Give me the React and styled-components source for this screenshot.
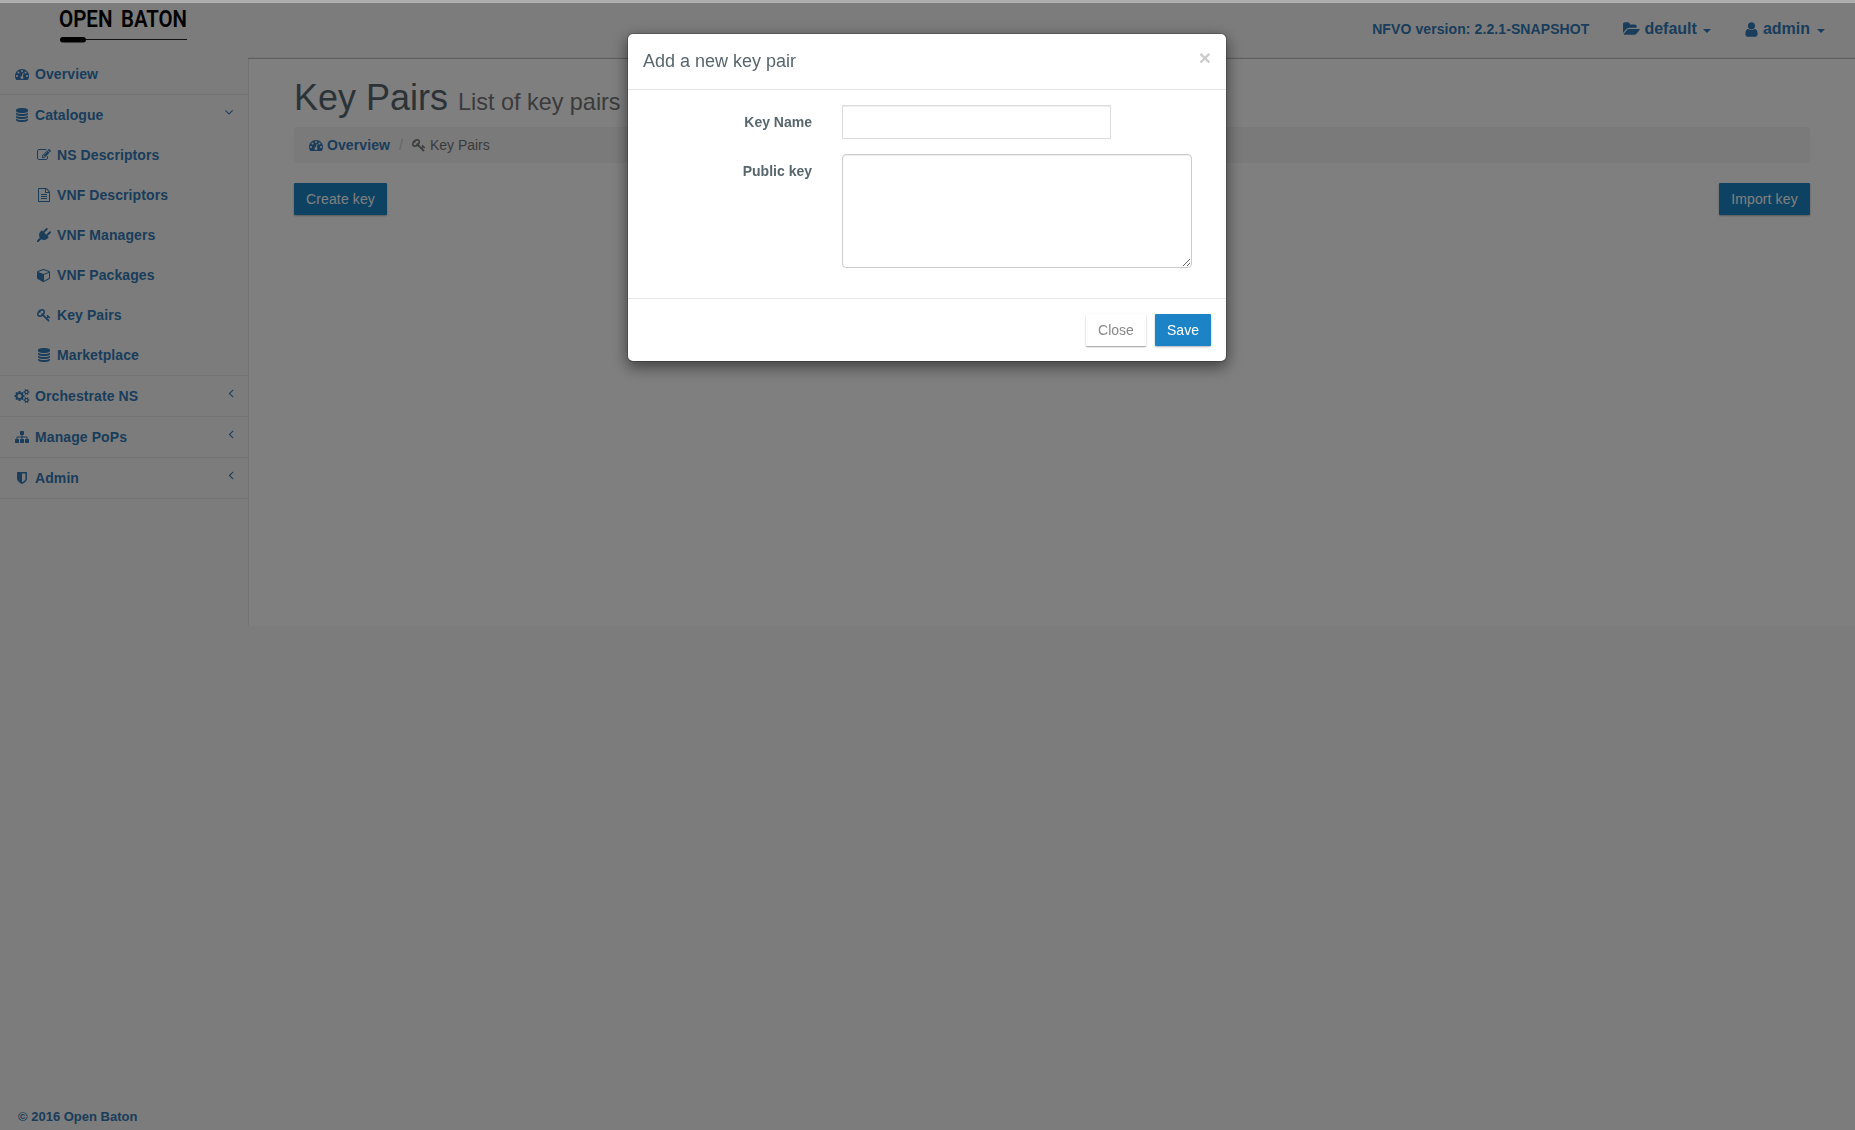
import React from 'react';
import styled, { createGlobalStyle, css } from 'styled-components';

const GlobalStyle = createGlobalStyle`
  *, *::before, *::after { box-sizing: border-box; }
  body {
    margin: 0;
    background: #f8f8f8;
    color: #58666e;
    font: 14px/20px "Liberation Sans", Arial, sans-serif;
  }
`;

const ICONS = {
  dashboard: 'M384 1152q0-53-37.5-90.5t-90.5-37.5-90.5 37.5-37.5 90.5 37.5 90.5 90.5 37.5 90.5-37.5 37.5-90.5zm192-448q0-53-37.5-90.5t-90.5-37.5-90.5 37.5-37.5 90.5 37.5 90.5 90.5 37.5 90.5-37.5 37.5-90.5zm428 481l101-382q6-26-7.5-48.5t-38.5-29.5-48 6.5-30 39.5l-101 382q-60 5-107 43.5t-63 98.5q-20 77 20 146t117 89 146-20 89-117q16-60-6-117t-72-91zm660-33q0-53-37.5-90.5t-90.5-37.5-90.5 37.5-37.5 90.5 37.5 90.5 90.5 37.5 90.5-37.5 37.5-90.5zm-640-640q0-53-37.5-90.5t-90.5-37.5-90.5 37.5-37.5 90.5 37.5 90.5 90.5 37.5 90.5-37.5 37.5-90.5zm448 192q0-53-37.5-90.5t-90.5-37.5-90.5 37.5-37.5 90.5 37.5 90.5 90.5 37.5 90.5-37.5 37.5-90.5zm320 448q0 261-141 483-19 29-54 29h-1402q-35 0-54-29-141-221-141-483 0-182 71-348t191-286 286-191 348-71 348 71 286 191 191 286 71 348z',
  database: 'M896 768q237 0 443-43t325-127v170q0 69-103 128t-280 93.5-385 34.5-385-34.5-280-93.5-103-128v-170q119 84 325 127t443 43zm0 768q237 0 443-43t325-127v170q0 69-103 128t-280 93.5-385 34.5-385-34.5-280-93.5-103-128v-170q119 84 325 127t443 43zm0-384q237 0 443-43t325-127v170q0 69-103 128t-280 93.5-385 34.5-385-34.5-280-93.5-103-128v-170q119 84 325 127t443 43zm0-1152q208 0 385 34.5t280 93.5 103 128v128q0 69-103 128t-280 93.5-385 34.5-385-34.5-280-93.5-103-128v-128q0-69 103-128t280-93.5 385-34.5z',
  edit: 'M888 1184l116-116-152-152-116 116v56h96v96h56zm440-720q-16-16-33 1l-350 350q-17 17-1 33t33-1l350-350q17-17 1-33zm80 594v190q0 119-84.5 203.5t-203.5 84.5h-832q-119 0-203.5-84.5t-84.5-203.5v-832q0-119 84.5-203.5t203.5-84.5h832q63 0 117 25 15 7 18 23 3 17-9 29l-49 49q-14 14-32 8-23-6-45-6h-832q-66 0-113 47t-47 113v832q0 66 47 113t113 47h832q66 0 113-47t47-113v-126q0-13 9-22l64-64q15-15 35-7t20 29zm-96-738l288 288-672 672h-288v-288zm444 132l-92 92-288-288 92-92q28-28 68-28t68 28l152 152q28 28 28 68t-28 68z',
  file: 'M1596 380q28 28 48 76t20 88v1152q0 40-28 68t-68 28h-1344q-40 0-68-28t-28-68v-1600q0-40 28-68t68-28h896q40 0 88 20t76 48zm-444-244v376h376q-10-29-22-41l-313-313q-12-12-41-22zm384 1528v-1024h-416q-40 0-68-28t-28-68v-416h-768v1536h1280zm-1024-864q0-14 9-23t23-9h704q14 0 23 9t9 23v64q0 14-9 23t-23 9h-704q-14 0-23-9t-9-23v-64zm736 224q14 0 23 9t9 23v64q0 14-9 23t-23 9h-704q-14 0-23-9t-9-23v-64q0-14 9-23t23-9h704zm0 256q14 0 23 9t9 23v64q0 14-9 23t-23 9h-704q-14 0-23-9t-9-23v-64q0-14 9-23t23-9h704z',
  plug: 'M1755 453q37 38 37 90.5t-37 90.5l-401 400 150 150-160 160q-163 163-389.5 186.5t-411.5-100.5l-362 362h-181v-181l362-362q-124-185-100.5-411.5t186.5-389.5l160-160 150 150 400-401q38-37 91-37t90 37 37 90.5-37 90.5l-400 401 234 234 401-400q38-37 91-37t90 37z',
  cube: 'M896 1629l640-349v-636l-640 233v752zm-64-865l698-254-698-254-698 254zm832-252v768q0 35-18 65t-49 47l-704 384q-28 16-61 16t-61-16l-704-384q-31-17-49-47t-18-65v-768q0-40 23-73t61-47l704-256q22-8 44-8t44 8l704 256q38 14 61 47t23 73z',
  key: 'M832 512q0-80-56-136t-136-56-136 56-56 136q0 42 19 83-41-19-83-19-80 0-136 56t-56 136 56 136 136 56 136-56 56-136q0-42-19-83 41 19 83 19 80 0 136-56t56-136zm851 704q0 17-49 66t-66 49q-9 0-28.5-16t-36.5-33-38.5-40-24.5-26l-96 96 220 220q28 28 28 68 0 42-39 81t-81 39q-40 0-68-28l-671-671q-176 131-365 131-163 0-265.5-102.5t-102.5-265.5q0-160 95-313t248-248 313-95q163 0 265.5 102.5t102.5 265.5q0 189-131 365l355 355 96-96q-3-3-26-24.5t-40-38.5-33-36.5-16-28.5q0-17 49-66t66-49q13 0 23 10 6 6 46 44.5t82 79.5 86.5 86 73 78 28.5 41z',
  cogs: 'M832 896q0-106-75-181t-181-75-181 75-75 181 75 181 181 75 181-75 75-181zm768 512q0-52-38-90t-90-38-90 38-38 90q0 53 37.5 90.5t90.5 37.5 90.5-37.5 37.5-90.5zm0-1024q0-52-38-90t-90-38-90 38-38 90q0 53 37.5 90.5t90.5 37.5 90.5-37.5 37.5-90.5zm-384 421v185q0 10-7 19.5t-16 10.5l-155 24q-11 35-32 76 34 48 90 115 7 11 7 20 0 12-7 19-23 30-82.5 89.5t-78.5 59.5q-11 0-21-7l-115-90q-37 19-77 31-11 108-23 155-7 24-30 24h-186q-11 0-20-7.5t-10-17.5l-23-153q-34-10-75-31l-118 89q-7 7-20 7-11 0-21-8-144-133-144-160 0-9 7-19 10-14 41-53t47-61q-23-44-35-82l-152-24q-10-1-17-9.5t-7-19.5v-185q0-10 7-19.5t16-10.5l155-24q11-35 32-76-34-48-90-115-7-11-7-20 0-12 7-20 22-30 82-89t79-59q11 0 21 7l115 90q34-18 77-32 11-108 23-154 7-24 30-24h186q11 0 20 7.5t10 17.5l23 153q34 10 75 31l118-89q8-7 20-7 11 0 21 8 144 133 144 160 0 8-7 19-12 16-42 54t-45 60q23 48 34 82l152 23q10 2 17 10.5t7 19.5zm640 533v140q0 16-149 31-12 27-30 52 51 113 51 138 0 4-4 7-122 71-124 71-8 0-46-47t-52-68q-20 2-30 2t-30-2q-14 21-52 68t-46 47q-2 0-124-71-4-3-4-7 0-25 51-138-18-25-30-52-149-15-149-31v-140q0-16 149-31 13-29 30-52-51-113-51-138 0-4 4-7 4-2 35-20t59-34 30-16q8 0 46 46.5t52 67.5q20-2 30-2t30 2q51-71 92-112l6-2q4 0 124 70 4 3 4 7 0 25-51 138 17 23 30 52 149 15 149 31zm0-1024v140q0 16-149 31-12 27-30 52 51 113 51 138 0 4-4 7-122 71-124 71-8 0-46-47t-52-68q-20 2-30 2t-30-2q-14 21-52 68t-46 47q-2 0-124-71-4-3-4-7 0-25 51-138-18-25-30-52-149-15-149-31v-140q0-16 149-31 13-29 30-52-51-113-51-138 0-4 4-7 4-2 35-20t59-34 30-16q8 0 46 46.5t52 67.5q20-2 30-2t30 2q51-71 92-112l6-2q4 0 124 70 4 3 4 7 0 25-51 138 17 23 30 52 149 15 149 31z',
  sitemap: 'M1792 1248v320q0 40-28 68t-68 28h-320q-40 0-68-28t-28-68v-320q0-40 28-68t68-28h96v-192h-512v192h96q40 0 68 28t28 68v320q0 40-28 68t-68 28h-320q-40 0-68-28t-28-68v-320q0-40 28-68t68-28h96v-192h-512v192h96q40 0 68 28t28 68v320q0 40-28 68t-68 28h-320q-40 0-68-28t-28-68v-320q0-40 28-68t68-28h96v-192q0-52 38-90t90-38h512v-192h-96q-40 0-68-28t-28-68v-320q0-40 28-68t68-28h320q40 0 68 28t28 68v320q0 40-28 68t-68 28h-96v192h512q52 0 90 38t38 90v192h96q40 0 68 28t28 68z',
  shield: 'M1344 960v-640h-448v1137q119-63 213-137 235-184 235-360zm192-768v768q0 86-33.5 170.5t-83 150-118 127.5-126.5 103-121 77.5-89.5 49.5-42.5 20q-12 6-26 6t-26-6q-16-7-42.5-20t-89.5-49.5-121-77.5-126.5-103-118-127.5-83-150-33.5-170.5v-768q0-26 19-45t45-19h1152q26 0 45 19t19 45z',
  folder: 'M1879 952q0 31-31 66l-336 396q-43 51-120.5 86.5t-143.5 35.5h-1088q-34 0-60.5-13t-26.5-43q0-31 31-66l336-396q43-51 120.5-86.5t143.5-35.5h1088q34 0 60.5 13t26.5 43zm-343-344v160h-832q-94 0-197 47.5t-164 119.5l-337 396-5 6q0-4-.5-12.5t-.5-12.5v-960q0-92 66-158t158-66h320q92 0 158 66t66 158v32h544q92 0 158 66t66 158z',
  user: 'M1536 1399q0 109-62.5 187t-150.5 78h-854q-88 0-150.5-78t-62.5-187q0-85 8.5-160.5t31.5-152 58.5-131 94-89 134.5-34.5q131 128 313 128t313-128q76 0 134.5 34.5t94 89 58.5 131 31.5 152 8.5 160.5zm-256-887q0 159-112.5 271.5t-271.5 112.5-271.5-112.5-112.5-271.5 112.5-271.5 271.5-112.5 271.5 112.5 112.5 271.5z',
  left: 'M1203 544q0 13-10 23l-393 393 393 393q10 10 10 23t-10 23l-50 50q-10 10-23 10t-23-10l-466-466q-10-10-10-23t10-23l466-466q10-10 23-10t23 10l50 50q10 10 10 23z',
  down: 'M1395 736q0 13-10 23l-466 466q-10 10-23 10t-23-10l-466-466q-10-10-10-23t10-23l50-50q10-10 23-10t23 10l393 393 393-393q10-10 23-10t23 10l50 50q10 10 10 23z',
};

const Glyph = styled.svg`
  flex: none;
  display: block;
  overflow: visible;
  fill: currentColor;
  width: ${(p) => p.$size}px;
  height: ${(p) => p.$size}px;
`;

function Icon({ name, size = 14 }) {
  return (
    <Glyph $size={size} viewBox="0 0 1792 1792" aria-hidden="true">
      <path d={ICONS[name]} />
    </Glyph>
  );
}

const Page = styled.div`
  height: 1130px;
  display: flex;
  flex-direction: column;
`;

const WindowEdge = styled.div`
  height: 3px;
  background: #adadad;
  border-bottom: 1px solid #b4b4b4;
  position: relative;
  z-index: 3;
`;

const Body = styled.div`
  flex: 1;
  display: grid;
  grid-template-columns: 248px 1fr;
  grid-template-rows: 54px 569px 1fr;
`;

const Brand = styled.div`
  padding-left: 55px;
`;

const Logo = styled.svg`
  display: block;
  width: 140px;
  height: 42px;
  overflow: visible;
`;

const LogoText = styled.text`
  font: 600 23.5px Roboto, sans-serif;
  fill: #000;
`;

const TopBar = styled.header`
  display: flex;
  justify-content: flex-end;
  align-items: flex-start;
  padding: 15px 30px 0 0;
  color: #337ab7;
  font-weight: bold;
`;

const Version = styled.span`
  letter-spacing: 0.09px;
  line-height: 22px;
  margin-right: 34px;
`;

const TopLink = styled.a`
  display: flex;
  align-items: center;
  font-size: 16px;
  line-height: 22px;
  gap: ${(p) => p.$gap}px;
  margin-left: ${(p) => p.$offset || 0}px;
`;

const Caret = styled.span`
  border: 4px solid transparent;
  border-top-color: currentColor;
  border-bottom: 0;
  margin: 3px 0 0 ${(p) => p.$space}px;
`;

const Sidebar = styled.nav`
  margin-top: -3px;
  grid-row: 2 / 3;
`;

const Menu = styled.ul`
  list-style: none;
  margin: 0;
  padding: 0;
`;

const MenuGroup = styled.li`
  border-bottom: 1px solid #e7e7e7;
`;

const MenuLink = styled.a`
  display: flex;
  align-items: center;
  height: 40px;
  padding: 0 15px 0 ${(p) => (p.$nested ? 35 : 13)}px;
  color: #337ab7;
  font-weight: bold;
  letter-spacing: 0.09px;
`;

const IconSlot = styled.span`
  width: 18px;
  margin-right: 4px;
  display: flex;
  justify-content: center;
`;

const Arrow = styled.span`
  margin: -7px ${(p) => (p.$open ? -3 : -4.5)}px 0 auto;
`;

const Content = styled.main`
  background: #fff;
  border-left: 1px solid #e7e7e7;
  padding: 0 45px;
  margin-top: 2px;
  box-shadow: 0 -1px 0 #bebebe, 0 -2px 0 #ececec;
`;

const Title = styled.h1`
  margin: 19px 0 9px;
  font-size: 36px;
  line-height: 40px;
  font-weight: normal;
`;

const Subtitle = styled.small`
  font-size: 23.4px;
  line-height: 1;
  color: #777;
`;

const Breadcrumb = styled.div`
  display: flex;
  align-items: center;
  height: 36px;
  padding: 0 15px;
  border-radius: 4px;
  background: #f5f5f5;
  color: #777;
`;

const Crumb = styled.span`
  display: flex;
  align-items: center;
  gap: 4px;
  ${(p) => p.$link && css`
    color: #337ab7;
    font-weight: bold;
    letter-spacing: 0.09px;
  `}
`;

const Slash = styled.span`
  color: #ccc;
  padding: 0 9px;
`;

const Actions = styled.div`
  display: flex;
  justify-content: space-between;
  margin-top: 20px;
`;

const Button = styled.button`
  height: 32px;
  width: ${(p) => p.$width}px;
  padding: 0;
  border: 0;
  border-radius: 1px;
  font: 14px/20px "Liberation Sans", Arial, sans-serif;
  letter-spacing: ${(p) => (p.$wide ? 0.12 : 0)}px;
  color: ${(p) => (p.$plain ? '#888' : '#fff')};
  background: ${(p) => (p.$plain ? '#fff' : '#1c84c6')};
  box-shadow: 0 1px 2px rgba(0, 0, 0, 0.3)${(p) => (p.$plain ? ', 0 1px 0 rgba(0, 0, 0, 0.12)' : '')};
`;

const Footer = styled.footer`
  grid-column: 1 / -1;
  align-self: end;
  padding: 0 18px 3px;
  color: #337ab7;
  font-size: 13px;
  font-weight: bold;
`;

const Backdrop = styled.div`
  position: fixed;
  inset: 3px 0 0;
  z-index: 2;
  background: rgba(0, 0, 0, 0.5);
  padding: 30px 0 0 627px;
`;

const Dialog = styled.section`
  width: 600px;
  border: 1px solid rgba(0, 0, 0, 0.2);
  border-radius: 6px;
  background: #fff;
  background-clip: padding-box;
  box-shadow: 0 5px 15px rgba(0, 0, 0, 0.5);
`;

const DialogHeader = styled.header`
  display: flex;
  justify-content: space-between;
  align-items: flex-start;
  height: 56px;
  padding: 13px 15px 0;
  border-bottom: 1px solid #e5e5e5;
`;

const DialogTitle = styled.h4`
  margin: 1px 0 0;
  font-size: 18px;
  line-height: 26px;
  font-weight: normal;
`;

const CloseMark = styled.button`
  border: 0;
  padding: 0;
  background: none;
  color: #ccc;
  font: bold 21px/21px "Liberation Sans", Arial, sans-serif;
`;

const Form = styled.form`
  display: grid;
  grid-template-columns: 169px 1fr;
  column-gap: 30px;
  row-gap: 15px;
  height: 208px;
  padding: 15px 15px 0;
  align-content: start;
  justify-items: start;
`;

const Label = styled.label`
  justify-self: end;
  padding-top: 7px;
  font-weight: bold;
`;

const fieldStyle = css`
  display: block;
  margin: 0;
  padding: 6px 12px;
  background: #fff;
  outline: none;
  box-shadow: inset 0 1px 1px rgba(0, 0, 0, 0.075);
`;

const Input = styled.input`
  ${fieldStyle}
  width: 269px;
  height: 34px;
  border: 1px solid #ddd;
`;

const TextArea = styled.textarea`
  ${fieldStyle}
  width: 350px;
  height: 114px;
  border: 1px solid #ccc;
  border-radius: 4px;
`;

const DialogFooter = styled.footer`
  display: flex;
  justify-content: flex-end;
  gap: 9px;
  padding: 15px;
  border-top: 1px solid #e5e5e5;
`;

const CATALOGUE = [
  ['edit', 'NS Descriptors'],
  ['file', 'VNF Descriptors'],
  ['plug', 'VNF Managers'],
  ['cube', 'VNF Packages'],
  ['key', 'Key Pairs'],
  ['database', 'Marketplace'],
];

const SECTIONS = [
  { icon: 'dashboard', label: 'Overview' },
  { icon: 'database', label: 'Catalogue', arrow: 'down', children: CATALOGUE },
  { icon: 'cogs', label: 'Orchestrate NS', arrow: 'left' },
  { icon: 'sitemap', label: 'Manage PoPs', arrow: 'left' },
  { icon: 'shield', label: 'Admin', arrow: 'left' },
];

function MenuItem({ icon, label, arrow, nested }) {
  return (
    <MenuLink $nested={nested}>
      <IconSlot><Icon name={icon} /></IconSlot>
      {label}
      {arrow && <Arrow $open={arrow === 'down'}><Icon name={arrow} /></Arrow>}
    </MenuLink>
  );
}

function KeyPairDialog() {
  return (
    <Backdrop>
      <Dialog role="dialog">
        <DialogHeader>
          <DialogTitle>Add a new key pair</DialogTitle>
          <CloseMark type="button">×</CloseMark>
        </DialogHeader>
        <Form>
          <Label htmlFor="keyName">Key Name</Label>
          <Input id="keyName" />
          <Label htmlFor="publicKey">Public key</Label>
          <TextArea id="publicKey" />
        </Form>
        <DialogFooter>
          <Button type="button" $plain $width={60}>Close</Button>
          <Button type="button" $width={56}>Save</Button>
        </DialogFooter>
      </Dialog>
    </Backdrop>
  );
}

export default function App() {
  return (
    <Page>
      <GlobalStyle />
      <WindowEdge />
      <Body>
        <Brand>
          <Logo viewBox="0 0 140 42">
            <LogoText x="4" y="24" textLength="53.5" lengthAdjust="spacingAndGlyphs">OPEN</LogoText>
            <LogoText x="66" y="24" textLength="66" lengthAdjust="spacingAndGlyphs">BATON</LogoText>
            <rect x="30" y="36" width="102" height="1" fill="#222" />
            <rect x="5" y="34" width="26" height="5.5" rx="2.75" />
          </Logo>
        </Brand>
        <TopBar>
          <Version>NFVO version: 2.2.1-SNAPSHOT</Version>
          <TopLink $gap={5}><Icon name="folder" size={16} />default<Caret $space={1} /></TopLink>
          <TopLink $gap={3} $offset={32}><Icon name="user" size={17} />admin<Caret $space={4} /></TopLink>
        </TopBar>
        <Sidebar>
          <Menu>
            {SECTIONS.map((s) => (
              <MenuGroup key={s.label}>
                <MenuItem icon={s.icon} label={s.label} arrow={s.arrow} />
                {s.children && (
                  <Menu>
                    {s.children.map(([icon, label]) => (
                      <li key={label}><MenuItem icon={icon} label={label} nested /></li>
                    ))}
                  </Menu>
                )}
              </MenuGroup>
            ))}
          </Menu>
        </Sidebar>
        <Content>
          <Title>Key Pairs <Subtitle>List of key pairs</Subtitle></Title>
          <Breadcrumb>
            <Crumb $link><Icon name="dashboard" />Overview</Crumb>
            <Slash>/</Slash>
            <Crumb><Icon name="key" />Key Pairs</Crumb>
          </Breadcrumb>
          <Actions>
            <Button type="button" $wide $width={93}>Create key</Button>
            <Button type="button" $wide $width={91}>Import key</Button>
          </Actions>
        </Content>
        <Footer>© 2016 Open Baton</Footer>
      </Body>
      <KeyPairDialog />
    </Page>
  );
}
